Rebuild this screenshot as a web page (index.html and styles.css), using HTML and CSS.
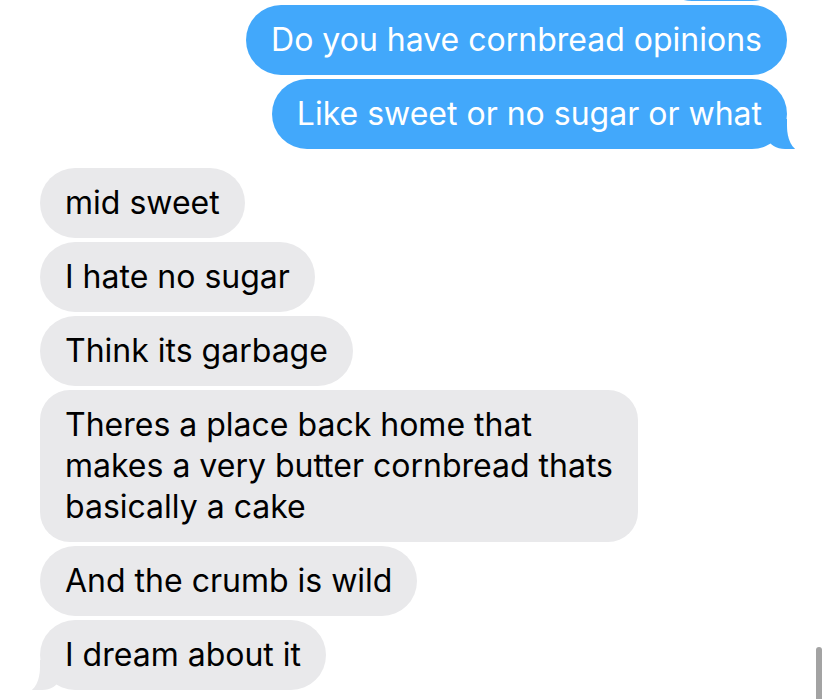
FILE: index.html
```html
<!DOCTYPE html>
<html>
<head>
<meta charset="utf-8">
<link rel="stylesheet" href="styles.css">
</head>
<body>
<div class="thread">
  <div class="bubble out prev" aria-hidden="true">&nbsp;</div>
  <div class="bubble out">Do you have cornbread opinions</div>
  <div class="bubble out tail">Like sweet or no sugar or what</div>
  <div class="bubble in first">mid sweet</div>
  <div class="bubble in">I hate no sugar</div>
  <div class="bubble in">Think its garbage</div>
  <div class="bubble in multi">Theres a place back home that<br>makes a very butter cornbread thats<br>basically a cake</div>
  <div class="bubble in">And the crumb is wild</div>
  <div class="bubble in tail">I dream about it</div>
</div>
<div class="scrollbar"></div>
</body>
</html>
```

FILE: styles.css
```css
html, body {
  margin: 0;
  padding: 0;
  background: #ffffff;
  overflow: hidden;
  height: 699px;
}

body {
  font-family: "Inter", "Noto Sans", sans-serif;
  font-size: 32px;
  line-height: 41px;
  position: relative;
}

.thread {
  display: flex;
  flex-direction: column;
  gap: 4px;
  padding: 0 41px 0 40px;
}

.bubble {
  position: relative;
  padding: 14px 25px 15px;
  border-radius: 35px;
  white-space: nowrap;
}

.bubble.multi {
  border-radius: 30px;
}

.out {
  align-self: flex-end;
  background: #42a8fb;
  color: #ffffff;
}

.out.prev {
  width: 80px;
  margin-top: -69px;
}

.in {
  align-self: flex-start;
  background: #e9e9eb;
  color: #000000;
}

.in.first {
  margin-top: 15px;
}

.out.tail::before {
  content: "";
  position: absolute;
  right: -12px;
  bottom: 0;
  width: 30px;
  height: 30px;
  background: #42a8fb;
  border-bottom-left-radius: 16px 10px;
}

.out.tail::after {
  content: "";
  position: absolute;
  left: 100%;
  bottom: -1px;
  width: 24px;
  height: 32px;
  background: #ffffff;
  border-bottom-left-radius: 12px 24px;
}

.in.tail::before {
  content: "";
  position: absolute;
  left: -12px;
  bottom: 0;
  width: 30px;
  height: 30px;
  background: #e9e9eb;
  border-bottom-right-radius: 16px 10px;
}

.in.tail::after {
  content: "";
  position: absolute;
  right: 100%;
  bottom: -1px;
  width: 24px;
  height: 32px;
  background: #ffffff;
  border-bottom-right-radius: 12px 24px;
}

.scrollbar {
  position: absolute;
  right: 6px;
  bottom: 0;
  width: 6px;
  height: 52px;
  background: #a3a3a3;
  border-radius: 3px 3px 0 0;
}
```
